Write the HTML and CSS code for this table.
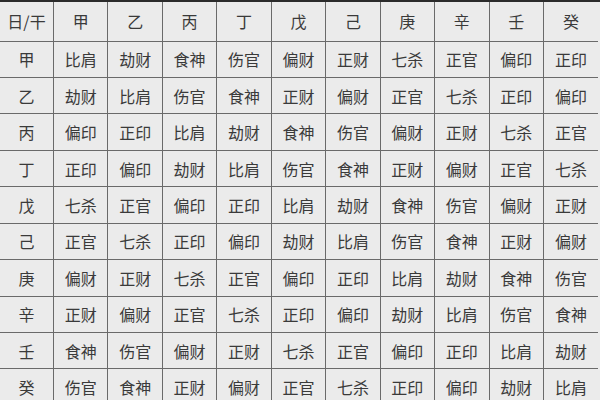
FILE: index.html
```html
<!DOCTYPE html>
<html lang="zh">
<head>
<meta charset="utf-8">
<title>十神表</title>
<link rel="stylesheet" href="styles.css">
</head>
<body>
<div class="topbar"></div>
<table class="shishen">
  <colgroup><col class="c-first"><col span="10"></colgroup>
  <thead>
    <tr class="head"><th>日/干</th><th>甲</th><th>乙</th><th>丙</th><th>丁</th><th>戊</th><th>己</th><th>庚</th><th>辛</th><th>壬</th><th>癸</th></tr>
  </thead>
  <tbody>
    <tr><th>甲</th><td>比肩</td><td>劫财</td><td>食神</td><td>伤官</td><td>偏财</td><td>正财</td><td>七杀</td><td>正官</td><td>偏印</td><td>正印</td></tr>
    <tr><th>乙</th><td>劫财</td><td>比肩</td><td>伤官</td><td>食神</td><td>正财</td><td>偏财</td><td>正官</td><td>七杀</td><td>正印</td><td>偏印</td></tr>
    <tr><th>丙</th><td>偏印</td><td>正印</td><td>比肩</td><td>劫财</td><td>食神</td><td>伤官</td><td>偏财</td><td>正财</td><td>七杀</td><td>正官</td></tr>
    <tr><th>丁</th><td>正印</td><td>偏印</td><td>劫财</td><td>比肩</td><td>伤官</td><td>食神</td><td>正财</td><td>偏财</td><td>正官</td><td>七杀</td></tr>
    <tr><th>戊</th><td>七杀</td><td>正官</td><td>偏印</td><td>正印</td><td>比肩</td><td>劫财</td><td>食神</td><td>伤官</td><td>偏财</td><td>正财</td></tr>
    <tr><th>己</th><td>正官</td><td>七杀</td><td>正印</td><td>偏印</td><td>劫财</td><td>比肩</td><td>伤官</td><td>食神</td><td>正财</td><td>偏财</td></tr>
    <tr><th>庚</th><td>偏财</td><td>正财</td><td>七杀</td><td>正官</td><td>偏印</td><td>正印</td><td>比肩</td><td>劫财</td><td>食神</td><td>伤官</td></tr>
    <tr><th>辛</th><td>正财</td><td>偏财</td><td>正官</td><td>七杀</td><td>正印</td><td>偏印</td><td>劫财</td><td>比肩</td><td>伤官</td><td>食神</td></tr>
    <tr><th>壬</th><td>食神</td><td>伤官</td><td>偏财</td><td>正财</td><td>七杀</td><td>正官</td><td>偏印</td><td>正印</td><td>比肩</td><td>劫财</td></tr>
    <tr><th>癸</th><td>伤官</td><td>食神</td><td>正财</td><td>偏财</td><td>正官</td><td>七杀</td><td>正印</td><td>偏印</td><td>劫财</td><td>比肩</td></tr>
  </tbody>
</table>
</body>
</html>
```
FILE: styles.css
```css
html, body {
  margin: 0;
  padding: 0;
  background: #ebebeb;
  overflow: hidden;
}
.topbar {
  height: 2px;
  background: #2b2b2b;
}
.shishen {
  border-collapse: collapse;
  table-layout: fixed;
  width: 599px;
  margin-left: -1px;
  font-family: "Noto Sans CJK SC", "Noto Sans", sans-serif;
  font-size: 16px;
  color: #3a3a3a;
  background: #ebebeb;
}
.c-first {
  width: 54px;
}
.shishen th,
.shishen td {
  border: 1px solid #6a6a6a;
  text-align: center;
  vertical-align: middle;
  font-weight: 400;
  padding: 0;
  height: 35.45px;
  line-height: 20px;
}
.shishen .head th {
  border-top: none;
  height: 38.5px;
}
.shishen tr > :last-child {
  border-right: none;
}
```
